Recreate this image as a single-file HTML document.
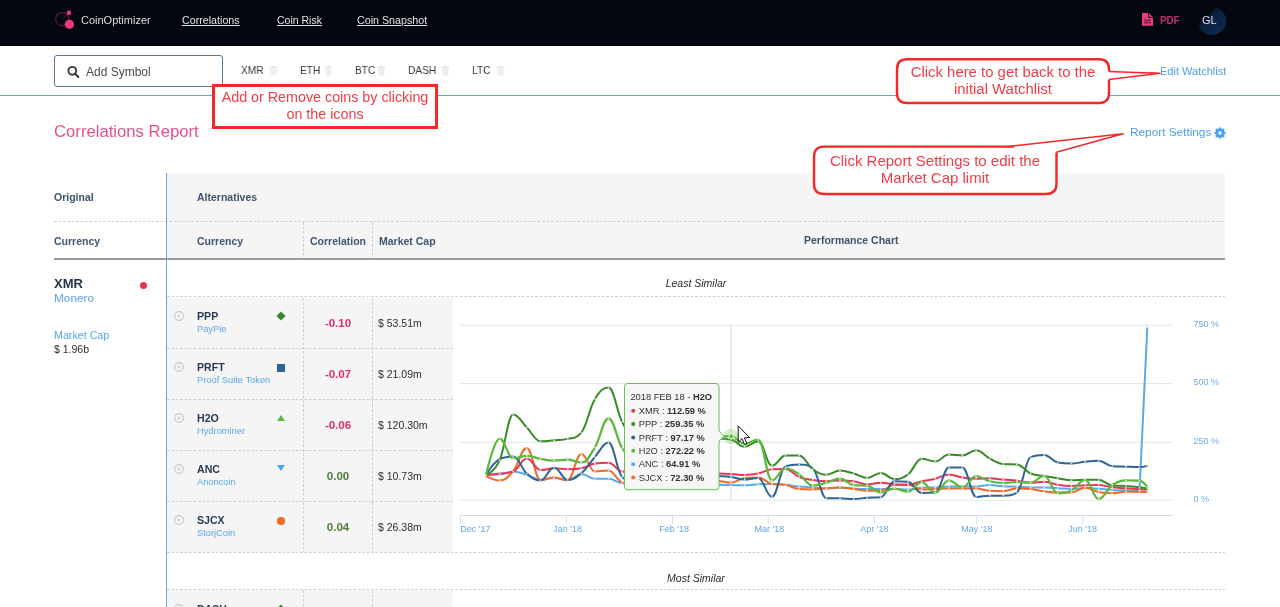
<!DOCTYPE html>
<html><head><meta charset="utf-8"><title>CoinOptimizer - Correlations Report</title>
<style>
html,body{margin:0;padding:0;background:#fff;width:1280px;height:607px;overflow:hidden;position:relative;font-family:"Liberation Sans",sans-serif;}
.t{position:absolute;white-space:nowrap;}
body>div,body>svg{will-change:transform;}
.b{position:absolute;}
svg.b text{font-family:"Liberation Sans",sans-serif;}
</style></head><body>
<div class="b" style="left:0px;top:0px;width:1280px;height:46px;background:#03070f;"></div>
<svg class="b" style="left:50px;top:6px" width="30" height="30" viewBox="50 6 30 30">
<circle cx="62.3" cy="19.2" r="6.7" fill="none" stroke="#6a1434" stroke-width="1.2"/>
<line x1="62.3" y1="19.2" x2="68.8" y2="12.8" stroke="#6a1434" stroke-width="1"/>
<circle cx="68.9" cy="12.7" r="2.2" fill="#ee3a7c"/>
<circle cx="69.4" cy="24.3" r="4.6" fill="#ee3a7c"/>
</svg>
<div class="t" style="left:80.60px;top:14.69px;font-size:11px;line-height:11px;color:#dcdcdc;">CoinOptimizer</div>
<div class="t" style="left:182.00px;top:14.94px;font-size:10.7px;line-height:10.7px;color:#e2e2e2;text-decoration:underline;">Correlations</div>
<div class="t" style="left:276.60px;top:15.11px;font-size:10.5px;line-height:10.5px;color:#e2e2e2;text-decoration:underline;">Coin Risk</div>
<div class="t" style="left:357.00px;top:14.94px;font-size:10.7px;line-height:10.7px;color:#e2e2e2;text-decoration:underline;">Coin Snapshot</div>
<svg class="b" style="left:1140px;top:11px" width="16" height="17" viewBox="1140 11 16 17">
<path d="M1142 13 H1148.8 L1153 17.2 V25.8 H1142 Z" fill="#e83e7a"/>
<path d="M1148.6 13 V17.4 H1153" fill="none" stroke="#03070f" stroke-width="0.9"/>
<rect x="1144" y="19.4" width="7" height="4.2" fill="#8e2450"/>
<rect x="1144" y="21.1" width="7" height="0.8" fill="#c8306a"/>
</svg>
<div class="t" style="left:1159.60px;top:15.23px;font-size:10.6px;line-height:10.6px;color:#c8306a;font-weight:700;transform:scaleX(0.92);transform-origin:0 0;">PDF</div>
<div class="b" style="left:1197.6px;top:6.5px;width:28px;height:28px;border-radius:50%;background:linear-gradient(135deg,rgba(3,7,15,0) 30%,#0a2140 40%,#0f2d52 100%);"></div>
<div class="t" style="left:1201.80px;top:14.89px;font-size:11px;line-height:11px;color:#dedede;">GL</div>
<div class="b" style="left:54px;top:55px;width:169px;height:32px;box-sizing:border-box;border:1px solid #5b7691;border-radius:3px;background:#fff;"></div>
<svg class="b" style="left:64px;top:64px" width="18" height="18" viewBox="64 64 18 18">
<circle cx="72.3" cy="70.8" r="3.9" fill="none" stroke="#3a3a3a" stroke-width="1.9"/>
<line x1="75.2" y1="73.8" x2="78.3" y2="77" stroke="#3a3a3a" stroke-width="2.1" stroke-linecap="round"/>
</svg>
<div class="t" style="left:85.50px;top:66.14px;font-size:12px;line-height:12px;color:#4a4a4a;">Add Symbol</div>
<div class="t" style="left:241.00px;top:64.81px;font-size:11.8px;line-height:11.8px;color:#383838;transform:scaleX(0.86);transform-origin:0 0;">XMR</div>
<svg class="b" style="left:269.4px;top:65px" width="9" height="11" viewBox="0 0 9 11">
<rect x="0.3" y="1.8" width="8.2" height="1.1" fill="#e6e6e6"/><rect x="2.9" y="0.9" width="3" height="1.1" fill="#e6e6e6"/>
<path d="M1.1 3.4 H7.7 L7.2 10.3 H1.6 Z" fill="#ebebeb"/>
<rect x="3" y="4" width="0.7" height="5.5" fill="#f4f4f4"/><rect x="5.2" y="4" width="0.7" height="5.5" fill="#f4f4f4"/>
</svg>
<div class="t" style="left:300.00px;top:64.81px;font-size:11.8px;line-height:11.8px;color:#383838;transform:scaleX(0.86);transform-origin:0 0;">ETH</div>
<svg class="b" style="left:324px;top:65px" width="9" height="11" viewBox="0 0 9 11">
<rect x="0.3" y="1.8" width="8.2" height="1.1" fill="#e6e6e6"/><rect x="2.9" y="0.9" width="3" height="1.1" fill="#e6e6e6"/>
<path d="M1.1 3.4 H7.7 L7.2 10.3 H1.6 Z" fill="#ebebeb"/>
<rect x="3" y="4" width="0.7" height="5.5" fill="#f4f4f4"/><rect x="5.2" y="4" width="0.7" height="5.5" fill="#f4f4f4"/>
</svg>
<div class="t" style="left:354.70px;top:64.81px;font-size:11.8px;line-height:11.8px;color:#383838;transform:scaleX(0.86);transform-origin:0 0;">BTC</div>
<svg class="b" style="left:377px;top:65px" width="9" height="11" viewBox="0 0 9 11">
<rect x="0.3" y="1.8" width="8.2" height="1.1" fill="#e6e6e6"/><rect x="2.9" y="0.9" width="3" height="1.1" fill="#e6e6e6"/>
<path d="M1.1 3.4 H7.7 L7.2 10.3 H1.6 Z" fill="#ebebeb"/>
<rect x="3" y="4" width="0.7" height="5.5" fill="#f4f4f4"/><rect x="5.2" y="4" width="0.7" height="5.5" fill="#f4f4f4"/>
</svg>
<div class="t" style="left:408.30px;top:64.81px;font-size:11.8px;line-height:11.8px;color:#383838;transform:scaleX(0.86);transform-origin:0 0;">DASH</div>
<svg class="b" style="left:441px;top:65px" width="9" height="11" viewBox="0 0 9 11">
<rect x="0.3" y="1.8" width="8.2" height="1.1" fill="#e6e6e6"/><rect x="2.9" y="0.9" width="3" height="1.1" fill="#e6e6e6"/>
<path d="M1.1 3.4 H7.7 L7.2 10.3 H1.6 Z" fill="#ebebeb"/>
<rect x="3" y="4" width="0.7" height="5.5" fill="#f4f4f4"/><rect x="5.2" y="4" width="0.7" height="5.5" fill="#f4f4f4"/>
</svg>
<div class="t" style="left:471.80px;top:64.81px;font-size:11.8px;line-height:11.8px;color:#383838;transform:scaleX(0.86);transform-origin:0 0;">LTC</div>
<svg class="b" style="left:496px;top:65px" width="9" height="11" viewBox="0 0 9 11">
<rect x="0.3" y="1.8" width="8.2" height="1.1" fill="#e6e6e6"/><rect x="2.9" y="0.9" width="3" height="1.1" fill="#e6e6e6"/>
<path d="M1.1 3.4 H7.7 L7.2 10.3 H1.6 Z" fill="#ebebeb"/>
<rect x="3" y="4" width="0.7" height="5.5" fill="#f4f4f4"/><rect x="5.2" y="4" width="0.7" height="5.5" fill="#f4f4f4"/>
</svg>
<div class="t" style="left:1160.40px;top:65.99px;font-size:11px;line-height:11px;color:#4a9ff5;">Edit Watchlist</div>
<div class="b" style="left:0px;top:95px;width:1280px;height:1px;background:#55a8ef;"></div>
<div class="t" style="left:54.30px;top:124.16px;font-size:16.7px;line-height:16.7px;color:#e8508a;">Correlations Report</div>
<div class="t" style="left:1130.40px;top:127.21px;font-size:11.8px;line-height:11.8px;color:#4a9ff5;">Report Settings</div>
<svg class="b" style="left:1213.3px;top:125.8px" width="14" height="14" viewBox="-7 -7 14 14">
<g fill="#4a9ff5">
<circle r="4.1"/>
<rect x="-1.3" y="-5.5" width="2.6" height="11" rx="0.5"/>
<rect x="-1.3" y="-5.5" width="2.6" height="11" rx="0.5" transform="rotate(45)"/>
<rect x="-1.3" y="-5.5" width="2.6" height="11" rx="0.5" transform="rotate(90)"/>
<rect x="-1.3" y="-5.5" width="2.6" height="11" rx="0.5" transform="rotate(135)"/>
</g><circle r="1.7" fill="#fff"/>
</svg>
<div class="b" style="left:167px;top:173px;width:1058px;height:86px;background:#f5f5f5;"></div>
<div class="b" style="left:54px;top:258px;width:1171px;height:2px;background:#9a9a9a;"></div>
<div class="b" style="left:54px;top:221px;width:1171px;height:1px;background-image:linear-gradient(to right,#cfcfcf 0,#cfcfcf 2.5px,transparent 2.5px);background-size:4.45px 1px;"></div>
<div class="b" style="left:303px;top:222px;width:1px;height:36px;background-image:linear-gradient(to bottom,#cfcfcf 0,#cfcfcf 2.5px,transparent 2.5px);background-size:1px 4.45px;"></div>
<div class="b" style="left:372px;top:222px;width:1px;height:36px;background-image:linear-gradient(to bottom,#cfcfcf 0,#cfcfcf 2.5px,transparent 2.5px);background-size:1px 4.45px;"></div>
<div class="t" style="left:54.00px;top:192.11px;font-size:10.5px;line-height:10.5px;color:#3f5570;font-weight:700;">Original</div>
<div class="t" style="left:197.00px;top:192.11px;font-size:10.5px;line-height:10.5px;color:#3f5570;font-weight:700;">Alternatives</div>
<div class="t" style="left:54.00px;top:235.51px;font-size:10.5px;line-height:10.5px;color:#3f5570;font-weight:700;">Currency</div>
<div class="t" style="left:197.00px;top:235.51px;font-size:10.5px;line-height:10.5px;color:#3f5570;font-weight:700;">Currency</div>
<div class="t" style="left:309.70px;top:235.51px;font-size:10.5px;line-height:10.5px;color:#3f5570;font-weight:700;">Correlation</div>
<div class="t" style="left:378.60px;top:235.51px;font-size:10.5px;line-height:10.5px;color:#3f5570;font-weight:700;">Market Cap</div>
<div class="t" style="left:804.40px;top:234.81px;font-size:10.5px;line-height:10.5px;color:#3f5570;font-weight:700;">Performance Chart</div>
<div class="t" style="left:54.00px;top:277.00px;font-size:13px;line-height:13px;color:#1f3448;font-weight:700;">XMR</div>
<div class="b" style="left:140px;top:282px;width:7.2px;height:7.2px;border-radius:50%;background:#e8304e;"></div>
<div class="t" style="left:54.00px;top:292.61px;font-size:11.8px;line-height:11.8px;color:#5aa5f0;">Monero</div>
<div class="t" style="left:54.00px;top:329.94px;font-size:10.7px;line-height:10.7px;color:#5aa5f0;">Market Cap</div>
<div class="t" style="left:54.00px;top:343.51px;font-size:10.5px;line-height:10.5px;color:#2a2a2a;">$ 1.96b</div>
<div class="t" style="left:395.50px;width:600px;text-align:center;top:278.31px;font-size:10.5px;line-height:10.5px;color:#2a2a33;font-style:italic;">Least Similar</div>
<div class="b" style="left:167px;top:296px;width:1058px;height:1px;background-image:linear-gradient(to right,#cfcfcf 0,#cfcfcf 2.5px,transparent 2.5px);background-size:4.45px 1px;"></div>
<div class="b" style="left:167px;top:298px;width:286px;height:254px;background:#f5f5f5;"></div>
<div class="b" style="left:167px;top:348px;width:286px;height:1px;background-image:linear-gradient(to right,#cfcfcf 0,#cfcfcf 2.5px,transparent 2.5px);background-size:4.45px 1px;"></div>
<div class="b" style="left:167px;top:399px;width:286px;height:1px;background-image:linear-gradient(to right,#cfcfcf 0,#cfcfcf 2.5px,transparent 2.5px);background-size:4.45px 1px;"></div>
<div class="b" style="left:167px;top:450px;width:286px;height:1px;background-image:linear-gradient(to right,#cfcfcf 0,#cfcfcf 2.5px,transparent 2.5px);background-size:4.45px 1px;"></div>
<div class="b" style="left:167px;top:501px;width:286px;height:1px;background-image:linear-gradient(to right,#cfcfcf 0,#cfcfcf 2.5px,transparent 2.5px);background-size:4.45px 1px;"></div>
<div class="b" style="left:303px;top:298px;width:1px;height:254px;background-image:linear-gradient(to bottom,#cfcfcf 0,#cfcfcf 2.5px,transparent 2.5px);background-size:1px 4.45px;"></div>
<div class="b" style="left:372px;top:298px;width:1px;height:254px;background-image:linear-gradient(to bottom,#cfcfcf 0,#cfcfcf 2.5px,transparent 2.5px);background-size:1px 4.45px;"></div>
<div class="b" style="left:167px;top:552px;width:1058px;height:1px;background-image:linear-gradient(to right,#cfcfcf 0,#cfcfcf 2.5px,transparent 2.5px);background-size:4.45px 1px;"></div>
<svg class="b" style="left:173px;top:310px" width="12" height="12" viewBox="-6 -6 12 12">
<circle r="4.4" fill="none" stroke="#c8c8c8" stroke-width="1.1"/><path d="M-1.6 -1.6 L1.6 1.6 M1.6 -1.6 L-1.6 1.6" stroke="#d0d0d0" stroke-width="1"/></svg>
<div class="t" style="left:197.00px;top:311.33px;font-size:10.6px;line-height:10.6px;color:#263a55;font-weight:700;">PPP</div>
<div class="t" style="left:197.00px;top:324.63px;font-size:9.3px;line-height:9.3px;color:#5aa5f0;">PayPie</div>
<div class="t" style="left:37.80px;width:600px;text-align:center;top:317.77px;font-size:11.5px;line-height:11.5px;color:#e0306a;font-weight:700;">-0.10</div>
<div class="t" style="left:378.40px;top:318.31px;font-size:10.5px;line-height:10.5px;color:#2f2f2f;">$ 53.51m</div>
<svg class="b" style="left:274.7px;top:310.3px" width="12" height="12" viewBox="-6 -6 12 12"><path d="M0 -4.6 L4.6 0 L0 4.6 L-4.6 0 Z" fill="#3a8a2a"/></svg>
<svg class="b" style="left:173px;top:361px" width="12" height="12" viewBox="-6 -6 12 12">
<circle r="4.4" fill="none" stroke="#c8c8c8" stroke-width="1.1"/><path d="M-1.6 -1.6 L1.6 1.6 M1.6 -1.6 L-1.6 1.6" stroke="#d0d0d0" stroke-width="1"/></svg>
<div class="t" style="left:197.00px;top:362.33px;font-size:10.6px;line-height:10.6px;color:#263a55;font-weight:700;">PRFT</div>
<div class="t" style="left:197.00px;top:375.63px;font-size:9.3px;line-height:9.3px;color:#5aa5f0;">Proof Suite Token</div>
<div class="t" style="left:37.80px;width:600px;text-align:center;top:368.77px;font-size:11.5px;line-height:11.5px;color:#e0306a;font-weight:700;">-0.07</div>
<div class="t" style="left:378.40px;top:369.31px;font-size:10.5px;line-height:10.5px;color:#2f2f2f;">$ 21.09m</div>
<div class="b" style="left:277.09999999999997px;top:364px;width:7.5px;height:7.5px;background:#2e6496;"></div>
<svg class="b" style="left:173px;top:412px" width="12" height="12" viewBox="-6 -6 12 12">
<circle r="4.4" fill="none" stroke="#c8c8c8" stroke-width="1.1"/><path d="M-1.6 -1.6 L1.6 1.6 M1.6 -1.6 L-1.6 1.6" stroke="#d0d0d0" stroke-width="1"/></svg>
<div class="t" style="left:197.00px;top:413.33px;font-size:10.6px;line-height:10.6px;color:#263a55;font-weight:700;">H2O</div>
<div class="t" style="left:197.00px;top:426.63px;font-size:9.3px;line-height:9.3px;color:#5aa5f0;">Hydrominer</div>
<div class="t" style="left:37.80px;width:600px;text-align:center;top:419.77px;font-size:11.5px;line-height:11.5px;color:#e0306a;font-weight:700;">-0.06</div>
<div class="t" style="left:378.40px;top:420.31px;font-size:10.5px;line-height:10.5px;color:#2f2f2f;">$ 120.30m</div>
<svg class="b" style="left:274.7px;top:412px" width="12" height="12" viewBox="-6 -6 12 12"><path d="M0 -3 L4 3 L-4 3 Z" fill="#5cb83c"/></svg>
<svg class="b" style="left:173px;top:463px" width="12" height="12" viewBox="-6 -6 12 12">
<circle r="4.4" fill="none" stroke="#c8c8c8" stroke-width="1.1"/><path d="M-1.6 -1.6 L1.6 1.6 M1.6 -1.6 L-1.6 1.6" stroke="#d0d0d0" stroke-width="1"/></svg>
<div class="t" style="left:197.00px;top:464.33px;font-size:10.6px;line-height:10.6px;color:#263a55;font-weight:700;">ANC</div>
<div class="t" style="left:197.00px;top:477.63px;font-size:9.3px;line-height:9.3px;color:#5aa5f0;">Anoncoin</div>
<div class="t" style="left:37.80px;width:600px;text-align:center;top:470.77px;font-size:11.5px;line-height:11.5px;color:#4d7d38;font-weight:700;">0.00</div>
<div class="t" style="left:378.40px;top:471.31px;font-size:10.5px;line-height:10.5px;color:#2f2f2f;">$ 10.73m</div>
<svg class="b" style="left:274.7px;top:461.5px" width="12" height="12" viewBox="-6 -6 12 12"><path d="M-4 -3 L4 -3 L0 3 Z" fill="#4aa8f0"/></svg>
<svg class="b" style="left:173px;top:514px" width="12" height="12" viewBox="-6 -6 12 12">
<circle r="4.4" fill="none" stroke="#c8c8c8" stroke-width="1.1"/><path d="M-1.6 -1.6 L1.6 1.6 M1.6 -1.6 L-1.6 1.6" stroke="#d0d0d0" stroke-width="1"/></svg>
<div class="t" style="left:197.00px;top:515.33px;font-size:10.6px;line-height:10.6px;color:#263a55;font-weight:700;">SJCX</div>
<div class="t" style="left:197.00px;top:528.63px;font-size:9.3px;line-height:9.3px;color:#5aa5f0;">StorjCoin</div>
<div class="t" style="left:37.80px;width:600px;text-align:center;top:521.77px;font-size:11.5px;line-height:11.5px;color:#4d7d38;font-weight:700;">0.04</div>
<div class="t" style="left:378.40px;top:522.31px;font-size:10.5px;line-height:10.5px;color:#2f2f2f;">$ 26.38m</div>
<div class="b" style="left:277.0px;top:517px;width:7.5px;height:7.5px;border-radius:50%;background:#f06a28;"></div>
<div class="t" style="left:395.50px;width:600px;text-align:center;top:572.61px;font-size:10.5px;line-height:10.5px;color:#2a2a33;font-style:italic;">Most Similar</div>
<div class="b" style="left:167px;top:589px;width:1058px;height:1px;background-image:linear-gradient(to right,#cfcfcf 0,#cfcfcf 2.5px,transparent 2.5px);background-size:4.45px 1px;"></div>
<div class="b" style="left:167px;top:590px;width:286px;height:17px;background:#f5f5f5;"></div>
<div class="b" style="left:303px;top:590px;width:1px;height:17px;background-image:linear-gradient(to bottom,#cfcfcf 0,#cfcfcf 2.5px,transparent 2.5px);background-size:1px 4.45px;"></div>
<div class="b" style="left:372px;top:590px;width:1px;height:17px;background-image:linear-gradient(to bottom,#cfcfcf 0,#cfcfcf 2.5px,transparent 2.5px);background-size:1px 4.45px;"></div>
<svg class="b" style="left:173px;top:603px" width="12" height="12" viewBox="-6 -6 12 12">
<circle r="4.4" fill="none" stroke="#c8c8c8" stroke-width="1.1"/></svg>
<div class="t" style="left:197.00px;top:604.33px;font-size:10.6px;line-height:10.6px;color:#263a55;font-weight:700;">DASH</div>
<svg class="b" style="left:274.7px;top:603.3px" width="12" height="12" viewBox="-6 -6 12 12"><path d="M0 -4.6 L4.6 0 L0 4.6 L-4.6 0 Z" fill="#3a8a2a"/></svg>
<div class="b" style="left:166px;top:173px;width:1px;height:434px;background:#55a8ef;"></div>
<svg class="b" style="left:0;top:0" width="1280" height="607" viewBox="0 0 1280 607">
<rect x="460" y="324.7" width="713" height="1" fill="#e6e6e6"/>
<rect x="460" y="383.1" width="713" height="1" fill="#e6e6e6"/>
<rect x="460" y="441.8" width="713" height="1" fill="#e6e6e6"/>
<rect x="460" y="499.7" width="713" height="1" fill="#e6e6e6"/>
<rect x="460" y="515" width="713" height="1" fill="#d3dbed"/>
<rect x="459.9" y="515" width="1" height="9" fill="#d8dfee"/>
<rect x="565.9" y="515" width="1" height="9" fill="#d8dfee"/>
<rect x="671.9" y="515" width="1" height="9" fill="#d8dfee"/>
<rect x="767.7" y="515" width="1" height="9" fill="#d8dfee"/>
<rect x="873.7" y="515" width="1" height="9" fill="#d8dfee"/>
<rect x="976.3" y="515" width="1" height="9" fill="#d8dfee"/>
<rect x="1082.3" y="515" width="1" height="9" fill="#d8dfee"/>
<rect x="730.5" y="325" width="1" height="175" fill="#d8d8d8"/>
<text x="460.3" y="532.2" font-size="9" fill="#5ea6ee" font-family="Liberation Sans">Dec '17</text>
<text x="553.3" y="532.2" font-size="9" fill="#5ea6ee" font-family="Liberation Sans">Jan '18</text>
<text x="659.2" y="532.2" font-size="9" fill="#5ea6ee" font-family="Liberation Sans">Feb '18</text>
<text x="754.5" y="532.2" font-size="9" fill="#5ea6ee" font-family="Liberation Sans">Mar '18</text>
<text x="860.2" y="532.2" font-size="9" fill="#5ea6ee" font-family="Liberation Sans">Apr '18</text>
<text x="961.3" y="532.2" font-size="9" fill="#5ea6ee" font-family="Liberation Sans">May '18</text>
<text x="1068.3" y="532.2" font-size="9" fill="#5ea6ee" font-family="Liberation Sans">Jun '18</text>
<text x="1193.5" y="327.4" font-size="9" fill="#6aaaf0" font-family="Liberation Sans">750 %</text>
<text x="1193.5" y="384.6" font-size="9" fill="#6aaaf0" font-family="Liberation Sans">500 %</text>
<text x="1193.5" y="444.4" font-size="9" fill="#6aaaf0" font-family="Liberation Sans">250 %</text>
<text x="1193.5" y="501.8" font-size="9" fill="#6aaaf0" font-family="Liberation Sans">0 %</text>
<path d="M486.0 474.9 C486.0 474.9 494.2 474.9 499.6 474.3 C505.1 473.7 507.8 471.6 513.2 471.6 C518.7 471.6 521.4 473.3 526.8 474.9 C532.3 476.5 535.0 479.7 540.5 479.7 C545.9 479.7 548.6 477.9 554.1 477.9 C559.5 477.9 562.2 480.2 567.7 480.2 C573.1 480.2 575.9 473.9 581.3 473.9 C586.8 473.9 589.5 478.8 594.9 478.8 C600.4 478.8 603.1 478.8 608.5 478.8 C614.0 478.8 616.7 482.6 622.1 483.3 C627.6 484.0 630.3 483.8 635.8 484.0 C641.2 484.2 643.9 484.3 649.4 484.5 C654.8 484.7 657.5 485.0 663.0 485.0 C668.4 485.0 671.2 485.0 676.6 485.0 C682.1 485.0 684.8 485.0 690.2 485.0 C695.7 485.0 698.4 485.0 703.8 485.0 C709.3 485.0 712.0 484.8 717.5 484.8 C722.9 484.8 725.6 485.0 731.1 485.1 C736.5 485.2 739.2 485.3 744.7 485.3 C750.1 485.3 752.9 484.6 758.3 484.3 C763.7 484.0 766.5 483.9 771.9 483.9 C777.4 483.9 780.1 484.3 785.5 484.8 C791.0 485.3 793.7 486.0 799.1 486.5 C804.6 487.0 807.3 487.0 812.8 487.4 C818.2 487.8 820.9 488.4 826.4 488.4 C831.8 488.4 834.5 487.4 840.0 487.4 C845.4 487.4 848.2 488.3 853.6 488.6 C859.1 488.9 861.8 489.1 867.2 489.1 C872.7 489.1 875.4 489.1 880.8 489.1 C886.3 489.1 889.0 489.1 894.5 489.1 C899.9 489.1 902.6 489.6 908.1 489.6 C913.5 489.6 916.2 488.2 921.7 487.8 C927.1 487.4 929.8 487.7 935.3 487.4 C940.7 487.1 943.5 486.5 948.9 486.5 C954.4 486.5 957.1 486.5 962.5 486.5 C968.0 486.5 970.7 486.5 976.1 486.5 C981.6 486.5 984.3 485.1 989.8 485.1 C995.2 485.1 997.9 485.9 1003.4 486.2 C1008.8 486.5 1011.5 486.5 1017.0 486.7 C1022.4 486.9 1025.2 487.4 1030.6 487.4 C1036.0 487.4 1038.8 487.4 1044.2 487.4 C1049.7 487.4 1052.4 487.9 1057.8 488.2 C1063.3 488.5 1066.0 489.0 1071.4 489.0 C1076.9 489.0 1079.6 488.0 1085.1 488.0 C1090.5 488.0 1093.2 488.4 1098.7 488.8 C1104.1 489.2 1106.8 489.6 1112.3 489.9 C1117.7 490.2 1120.5 490.2 1125.9 490.4 C1131.4 490.6 1139.5 490.7 1139.5 490.7 L1147.3 327.5" fill="none" stroke="#55aaf0" stroke-width="2" stroke-linejoin="round" stroke-linecap="round"/>
<circle cx="486.0" cy="474.9" r="0.9" fill="#fff" fill-opacity="0.75"/>
<circle cx="499.6" cy="474.3" r="0.9" fill="#fff" fill-opacity="0.75"/>
<circle cx="513.2" cy="471.6" r="0.9" fill="#fff" fill-opacity="0.75"/>
<circle cx="526.8" cy="474.9" r="0.9" fill="#fff" fill-opacity="0.75"/>
<circle cx="540.5" cy="479.7" r="0.9" fill="#fff" fill-opacity="0.75"/>
<circle cx="554.1" cy="477.9" r="0.9" fill="#fff" fill-opacity="0.75"/>
<circle cx="567.7" cy="480.2" r="0.9" fill="#fff" fill-opacity="0.75"/>
<circle cx="581.3" cy="473.9" r="0.9" fill="#fff" fill-opacity="0.75"/>
<circle cx="594.9" cy="478.8" r="0.9" fill="#fff" fill-opacity="0.75"/>
<circle cx="608.5" cy="478.8" r="0.9" fill="#fff" fill-opacity="0.75"/>
<circle cx="622.1" cy="483.3" r="0.9" fill="#fff" fill-opacity="0.75"/>
<circle cx="635.8" cy="484.0" r="0.9" fill="#fff" fill-opacity="0.75"/>
<circle cx="649.4" cy="484.5" r="0.9" fill="#fff" fill-opacity="0.75"/>
<circle cx="663.0" cy="485.0" r="0.9" fill="#fff" fill-opacity="0.75"/>
<circle cx="676.6" cy="485.0" r="0.9" fill="#fff" fill-opacity="0.75"/>
<circle cx="690.2" cy="485.0" r="0.9" fill="#fff" fill-opacity="0.75"/>
<circle cx="703.8" cy="485.0" r="0.9" fill="#fff" fill-opacity="0.75"/>
<circle cx="717.5" cy="484.8" r="0.9" fill="#fff" fill-opacity="0.75"/>
<circle cx="731.1" cy="485.1" r="0.9" fill="#fff" fill-opacity="0.75"/>
<circle cx="744.7" cy="485.3" r="0.9" fill="#fff" fill-opacity="0.75"/>
<circle cx="758.3" cy="484.3" r="0.9" fill="#fff" fill-opacity="0.75"/>
<circle cx="771.9" cy="483.9" r="0.9" fill="#fff" fill-opacity="0.75"/>
<circle cx="785.5" cy="484.8" r="0.9" fill="#fff" fill-opacity="0.75"/>
<circle cx="799.1" cy="486.5" r="0.9" fill="#fff" fill-opacity="0.75"/>
<circle cx="812.8" cy="487.4" r="0.9" fill="#fff" fill-opacity="0.75"/>
<circle cx="826.4" cy="488.4" r="0.9" fill="#fff" fill-opacity="0.75"/>
<circle cx="840.0" cy="487.4" r="0.9" fill="#fff" fill-opacity="0.75"/>
<circle cx="853.6" cy="488.6" r="0.9" fill="#fff" fill-opacity="0.75"/>
<circle cx="867.2" cy="489.1" r="0.9" fill="#fff" fill-opacity="0.75"/>
<circle cx="880.8" cy="489.1" r="0.9" fill="#fff" fill-opacity="0.75"/>
<circle cx="894.5" cy="489.1" r="0.9" fill="#fff" fill-opacity="0.75"/>
<circle cx="908.1" cy="489.6" r="0.9" fill="#fff" fill-opacity="0.75"/>
<circle cx="921.7" cy="487.8" r="0.9" fill="#fff" fill-opacity="0.75"/>
<circle cx="935.3" cy="487.4" r="0.9" fill="#fff" fill-opacity="0.75"/>
<circle cx="948.9" cy="486.5" r="0.9" fill="#fff" fill-opacity="0.75"/>
<circle cx="962.5" cy="486.5" r="0.9" fill="#fff" fill-opacity="0.75"/>
<circle cx="976.1" cy="486.5" r="0.9" fill="#fff" fill-opacity="0.75"/>
<circle cx="989.8" cy="485.1" r="0.9" fill="#fff" fill-opacity="0.75"/>
<circle cx="1003.4" cy="486.2" r="0.9" fill="#fff" fill-opacity="0.75"/>
<circle cx="1017.0" cy="486.7" r="0.9" fill="#fff" fill-opacity="0.75"/>
<circle cx="1030.6" cy="487.4" r="0.9" fill="#fff" fill-opacity="0.75"/>
<circle cx="1044.2" cy="487.4" r="0.9" fill="#fff" fill-opacity="0.75"/>
<circle cx="1057.8" cy="488.2" r="0.9" fill="#fff" fill-opacity="0.75"/>
<circle cx="1071.4" cy="489.0" r="0.9" fill="#fff" fill-opacity="0.75"/>
<circle cx="1085.1" cy="488.0" r="0.9" fill="#fff" fill-opacity="0.75"/>
<circle cx="1098.7" cy="488.8" r="0.9" fill="#fff" fill-opacity="0.75"/>
<circle cx="1112.3" cy="489.9" r="0.9" fill="#fff" fill-opacity="0.75"/>
<circle cx="1125.9" cy="490.4" r="0.9" fill="#fff" fill-opacity="0.75"/>
<circle cx="1139.5" cy="490.7" r="0.9" fill="#fff" fill-opacity="0.75"/>
<circle cx="1147.3" cy="327.5" r="0.9" fill="#fff" fill-opacity="0.75"/>
<path d="M486.0 476.2 C486.0 476.2 494.2 480.5 499.6 480.5 C505.1 480.5 507.8 477.5 513.2 471.0 C518.7 464.5 521.4 448.0 526.8 448.0 C532.3 448.0 535.0 480.2 540.5 480.2 C545.9 480.2 548.6 477.3 554.1 477.3 C559.5 477.3 562.2 480.2 567.7 480.2 C573.1 480.2 575.9 454.0 581.3 454.0 C586.8 454.0 589.5 471.5 594.9 471.5 C600.4 471.5 603.1 470.6 608.5 470.6 C614.0 470.6 616.7 480.8 622.1 482.4 C627.6 484.0 630.3 484.0 635.8 484.0 C641.2 484.0 643.9 483.4 649.4 483.0 C654.8 482.6 657.5 482.4 663.0 482.0 C668.4 481.6 671.2 481.0 676.6 481.0 C682.1 481.0 684.8 481.0 690.2 481.0 C695.7 481.0 698.4 481.0 703.8 481.0 C709.3 481.0 712.0 481.0 717.5 481.0 C722.9 481.0 725.6 482.7 731.1 482.7 C736.5 482.7 739.2 478.3 744.7 477.9 C750.1 477.5 752.9 477.5 758.3 477.5 C763.7 477.5 766.5 483.0 771.9 483.9 C777.4 484.8 780.1 483.9 785.5 484.8 C791.0 485.7 793.7 488.8 799.1 489.1 C804.6 489.4 807.3 489.4 812.8 489.4 C818.2 489.4 820.9 488.6 826.4 488.2 C831.8 487.8 834.5 487.4 840.0 487.4 C845.4 487.4 848.2 488.4 853.6 489.1 C859.1 489.8 861.8 490.8 867.2 490.8 C872.7 490.8 875.4 490.8 880.8 490.8 C886.3 490.8 889.0 484.8 894.5 484.8 C899.9 484.8 902.6 484.8 908.1 484.8 C913.5 484.8 916.2 489.5 921.7 489.5 C927.1 489.5 929.8 489.3 935.3 489.1 C940.7 488.9 943.5 488.6 948.9 488.6 C954.4 488.6 957.1 488.6 962.5 488.6 C968.0 488.6 970.7 488.6 976.1 488.6 C981.6 488.6 984.3 490.4 989.8 490.8 C995.2 491.2 997.9 491.2 1003.4 491.2 C1008.8 491.2 1011.5 488.4 1017.0 488.4 C1022.4 488.4 1025.2 488.5 1030.6 489.1 C1036.0 489.7 1038.8 490.6 1044.2 491.3 C1049.7 492.0 1052.4 492.6 1057.8 492.6 C1063.3 492.6 1066.0 492.6 1071.4 492.4 C1076.9 492.2 1079.6 487.7 1085.1 487.7 C1090.5 487.7 1093.2 490.9 1098.7 492.0 C1104.1 493.1 1106.8 493.3 1112.3 493.3 C1117.7 493.3 1120.5 491.6 1125.9 491.6 C1131.4 491.6 1134.1 491.9 1139.5 491.9 C1142.6 491.9 1147.3 491.9 1147.3 491.9" fill="none" stroke="#f26a25" stroke-width="2" stroke-linejoin="round" stroke-linecap="round"/>
<circle cx="486.0" cy="476.2" r="0.9" fill="#fff" fill-opacity="0.75"/>
<circle cx="499.6" cy="480.5" r="0.9" fill="#fff" fill-opacity="0.75"/>
<circle cx="513.2" cy="471.0" r="0.9" fill="#fff" fill-opacity="0.75"/>
<circle cx="526.8" cy="448.0" r="0.9" fill="#fff" fill-opacity="0.75"/>
<circle cx="540.5" cy="480.2" r="0.9" fill="#fff" fill-opacity="0.75"/>
<circle cx="554.1" cy="477.3" r="0.9" fill="#fff" fill-opacity="0.75"/>
<circle cx="567.7" cy="480.2" r="0.9" fill="#fff" fill-opacity="0.75"/>
<circle cx="581.3" cy="454.0" r="0.9" fill="#fff" fill-opacity="0.75"/>
<circle cx="594.9" cy="471.5" r="0.9" fill="#fff" fill-opacity="0.75"/>
<circle cx="608.5" cy="470.6" r="0.9" fill="#fff" fill-opacity="0.75"/>
<circle cx="622.1" cy="482.4" r="0.9" fill="#fff" fill-opacity="0.75"/>
<circle cx="635.8" cy="484.0" r="0.9" fill="#fff" fill-opacity="0.75"/>
<circle cx="649.4" cy="483.0" r="0.9" fill="#fff" fill-opacity="0.75"/>
<circle cx="663.0" cy="482.0" r="0.9" fill="#fff" fill-opacity="0.75"/>
<circle cx="676.6" cy="481.0" r="0.9" fill="#fff" fill-opacity="0.75"/>
<circle cx="690.2" cy="481.0" r="0.9" fill="#fff" fill-opacity="0.75"/>
<circle cx="703.8" cy="481.0" r="0.9" fill="#fff" fill-opacity="0.75"/>
<circle cx="717.5" cy="481.0" r="0.9" fill="#fff" fill-opacity="0.75"/>
<circle cx="731.1" cy="482.7" r="0.9" fill="#fff" fill-opacity="0.75"/>
<circle cx="744.7" cy="477.9" r="0.9" fill="#fff" fill-opacity="0.75"/>
<circle cx="758.3" cy="477.5" r="0.9" fill="#fff" fill-opacity="0.75"/>
<circle cx="771.9" cy="483.9" r="0.9" fill="#fff" fill-opacity="0.75"/>
<circle cx="785.5" cy="484.8" r="0.9" fill="#fff" fill-opacity="0.75"/>
<circle cx="799.1" cy="489.1" r="0.9" fill="#fff" fill-opacity="0.75"/>
<circle cx="812.8" cy="489.4" r="0.9" fill="#fff" fill-opacity="0.75"/>
<circle cx="826.4" cy="488.2" r="0.9" fill="#fff" fill-opacity="0.75"/>
<circle cx="840.0" cy="487.4" r="0.9" fill="#fff" fill-opacity="0.75"/>
<circle cx="853.6" cy="489.1" r="0.9" fill="#fff" fill-opacity="0.75"/>
<circle cx="867.2" cy="490.8" r="0.9" fill="#fff" fill-opacity="0.75"/>
<circle cx="880.8" cy="490.8" r="0.9" fill="#fff" fill-opacity="0.75"/>
<circle cx="894.5" cy="484.8" r="0.9" fill="#fff" fill-opacity="0.75"/>
<circle cx="908.1" cy="484.8" r="0.9" fill="#fff" fill-opacity="0.75"/>
<circle cx="921.7" cy="489.5" r="0.9" fill="#fff" fill-opacity="0.75"/>
<circle cx="935.3" cy="489.1" r="0.9" fill="#fff" fill-opacity="0.75"/>
<circle cx="948.9" cy="488.6" r="0.9" fill="#fff" fill-opacity="0.75"/>
<circle cx="962.5" cy="488.6" r="0.9" fill="#fff" fill-opacity="0.75"/>
<circle cx="976.1" cy="488.6" r="0.9" fill="#fff" fill-opacity="0.75"/>
<circle cx="989.8" cy="490.8" r="0.9" fill="#fff" fill-opacity="0.75"/>
<circle cx="1003.4" cy="491.2" r="0.9" fill="#fff" fill-opacity="0.75"/>
<circle cx="1017.0" cy="488.4" r="0.9" fill="#fff" fill-opacity="0.75"/>
<circle cx="1030.6" cy="489.1" r="0.9" fill="#fff" fill-opacity="0.75"/>
<circle cx="1044.2" cy="491.3" r="0.9" fill="#fff" fill-opacity="0.75"/>
<circle cx="1057.8" cy="492.6" r="0.9" fill="#fff" fill-opacity="0.75"/>
<circle cx="1071.4" cy="492.4" r="0.9" fill="#fff" fill-opacity="0.75"/>
<circle cx="1085.1" cy="487.7" r="0.9" fill="#fff" fill-opacity="0.75"/>
<circle cx="1098.7" cy="492.0" r="0.9" fill="#fff" fill-opacity="0.75"/>
<circle cx="1112.3" cy="493.3" r="0.9" fill="#fff" fill-opacity="0.75"/>
<circle cx="1125.9" cy="491.6" r="0.9" fill="#fff" fill-opacity="0.75"/>
<circle cx="1139.5" cy="491.9" r="0.9" fill="#fff" fill-opacity="0.75"/>
<circle cx="1147.3" cy="491.9" r="0.9" fill="#fff" fill-opacity="0.75"/>
<path d="M486.0 474.9 C486.0 474.9 494.2 474.3 499.6 473.6 C505.1 472.9 507.8 473.6 513.2 471.6 C518.7 469.6 521.4 458.4 526.8 458.4 C532.3 458.4 535.0 470.0 540.5 470.0 C545.9 470.0 548.6 468.3 554.1 468.3 C559.5 468.3 562.2 469.2 567.7 469.2 C573.1 469.2 575.9 469.2 581.3 468.3 C586.8 467.4 589.5 464.0 594.9 463.4 C600.4 462.8 603.1 462.8 608.5 462.8 C614.0 462.8 616.7 471.0 622.1 471.5 C627.6 472.0 630.3 471.7 635.8 472.0 C641.2 472.3 643.9 472.6 649.4 473.0 C654.8 473.4 657.5 474.0 663.0 474.0 C668.4 474.0 671.2 474.0 676.6 474.0 C682.1 474.0 684.8 473.5 690.2 473.5 C695.7 473.5 698.4 473.5 703.8 473.5 C709.3 473.5 712.0 473.5 717.5 473.5 C722.9 473.5 725.6 473.6 731.1 473.9 C736.5 474.2 739.2 474.9 744.7 474.9 C750.1 474.9 752.9 474.6 758.3 473.5 C763.7 472.4 766.5 469.5 771.9 469.2 C777.4 468.9 780.1 468.9 785.5 468.9 C791.0 468.9 793.7 474.8 799.1 477.0 C804.6 479.2 807.3 479.1 812.8 479.9 C818.2 480.7 820.9 481.2 826.4 481.2 C831.8 481.2 834.5 480.4 840.0 480.4 C845.4 480.4 848.2 480.5 853.6 481.3 C859.1 482.1 861.8 484.4 867.2 484.4 C872.7 484.4 875.4 482.7 880.8 482.7 C886.3 482.7 889.0 484.0 894.5 484.4 C899.9 484.8 902.6 484.8 908.1 484.8 C913.5 484.8 916.2 482.5 921.7 481.3 C927.1 480.1 929.8 480.1 935.3 478.7 C940.7 477.3 943.5 474.4 948.9 474.4 C954.4 474.4 957.1 476.6 962.5 477.5 C968.0 478.4 970.7 478.7 976.1 478.7 C981.6 478.7 984.3 478.2 989.8 478.2 C995.2 478.2 997.9 479.1 1003.4 479.6 C1008.8 480.1 1011.5 480.1 1017.0 480.7 C1022.4 481.3 1025.2 482.7 1030.6 482.7 C1036.0 482.7 1038.8 481.7 1044.2 481.7 C1049.7 481.7 1052.4 483.9 1057.8 484.8 C1063.3 485.7 1066.0 486.0 1071.4 486.0 C1076.9 486.0 1079.6 485.4 1085.1 485.2 C1090.5 485.0 1093.2 485.0 1098.7 485.0 C1104.1 485.0 1106.8 486.7 1112.3 487.3 C1117.7 487.9 1120.5 487.8 1125.9 488.2 C1131.4 488.6 1134.1 488.9 1139.5 489.3 C1142.6 489.5 1147.3 489.8 1147.3 489.8" fill="none" stroke="#e8365a" stroke-width="2" stroke-linejoin="round" stroke-linecap="round"/>
<circle cx="486.0" cy="474.9" r="0.9" fill="#fff" fill-opacity="0.75"/>
<circle cx="499.6" cy="473.6" r="0.9" fill="#fff" fill-opacity="0.75"/>
<circle cx="513.2" cy="471.6" r="0.9" fill="#fff" fill-opacity="0.75"/>
<circle cx="526.8" cy="458.4" r="0.9" fill="#fff" fill-opacity="0.75"/>
<circle cx="540.5" cy="470.0" r="0.9" fill="#fff" fill-opacity="0.75"/>
<circle cx="554.1" cy="468.3" r="0.9" fill="#fff" fill-opacity="0.75"/>
<circle cx="567.7" cy="469.2" r="0.9" fill="#fff" fill-opacity="0.75"/>
<circle cx="581.3" cy="468.3" r="0.9" fill="#fff" fill-opacity="0.75"/>
<circle cx="594.9" cy="463.4" r="0.9" fill="#fff" fill-opacity="0.75"/>
<circle cx="608.5" cy="462.8" r="0.9" fill="#fff" fill-opacity="0.75"/>
<circle cx="622.1" cy="471.5" r="0.9" fill="#fff" fill-opacity="0.75"/>
<circle cx="635.8" cy="472.0" r="0.9" fill="#fff" fill-opacity="0.75"/>
<circle cx="649.4" cy="473.0" r="0.9" fill="#fff" fill-opacity="0.75"/>
<circle cx="663.0" cy="474.0" r="0.9" fill="#fff" fill-opacity="0.75"/>
<circle cx="676.6" cy="474.0" r="0.9" fill="#fff" fill-opacity="0.75"/>
<circle cx="690.2" cy="473.5" r="0.9" fill="#fff" fill-opacity="0.75"/>
<circle cx="703.8" cy="473.5" r="0.9" fill="#fff" fill-opacity="0.75"/>
<circle cx="717.5" cy="473.5" r="0.9" fill="#fff" fill-opacity="0.75"/>
<circle cx="731.1" cy="473.9" r="0.9" fill="#fff" fill-opacity="0.75"/>
<circle cx="744.7" cy="474.9" r="0.9" fill="#fff" fill-opacity="0.75"/>
<circle cx="758.3" cy="473.5" r="0.9" fill="#fff" fill-opacity="0.75"/>
<circle cx="771.9" cy="469.2" r="0.9" fill="#fff" fill-opacity="0.75"/>
<circle cx="785.5" cy="468.9" r="0.9" fill="#fff" fill-opacity="0.75"/>
<circle cx="799.1" cy="477.0" r="0.9" fill="#fff" fill-opacity="0.75"/>
<circle cx="812.8" cy="479.9" r="0.9" fill="#fff" fill-opacity="0.75"/>
<circle cx="826.4" cy="481.2" r="0.9" fill="#fff" fill-opacity="0.75"/>
<circle cx="840.0" cy="480.4" r="0.9" fill="#fff" fill-opacity="0.75"/>
<circle cx="853.6" cy="481.3" r="0.9" fill="#fff" fill-opacity="0.75"/>
<circle cx="867.2" cy="484.4" r="0.9" fill="#fff" fill-opacity="0.75"/>
<circle cx="880.8" cy="482.7" r="0.9" fill="#fff" fill-opacity="0.75"/>
<circle cx="894.5" cy="484.4" r="0.9" fill="#fff" fill-opacity="0.75"/>
<circle cx="908.1" cy="484.8" r="0.9" fill="#fff" fill-opacity="0.75"/>
<circle cx="921.7" cy="481.3" r="0.9" fill="#fff" fill-opacity="0.75"/>
<circle cx="935.3" cy="478.7" r="0.9" fill="#fff" fill-opacity="0.75"/>
<circle cx="948.9" cy="474.4" r="0.9" fill="#fff" fill-opacity="0.75"/>
<circle cx="962.5" cy="477.5" r="0.9" fill="#fff" fill-opacity="0.75"/>
<circle cx="976.1" cy="478.7" r="0.9" fill="#fff" fill-opacity="0.75"/>
<circle cx="989.8" cy="478.2" r="0.9" fill="#fff" fill-opacity="0.75"/>
<circle cx="1003.4" cy="479.6" r="0.9" fill="#fff" fill-opacity="0.75"/>
<circle cx="1017.0" cy="480.7" r="0.9" fill="#fff" fill-opacity="0.75"/>
<circle cx="1030.6" cy="482.7" r="0.9" fill="#fff" fill-opacity="0.75"/>
<circle cx="1044.2" cy="481.7" r="0.9" fill="#fff" fill-opacity="0.75"/>
<circle cx="1057.8" cy="484.8" r="0.9" fill="#fff" fill-opacity="0.75"/>
<circle cx="1071.4" cy="486.0" r="0.9" fill="#fff" fill-opacity="0.75"/>
<circle cx="1085.1" cy="485.2" r="0.9" fill="#fff" fill-opacity="0.75"/>
<circle cx="1098.7" cy="485.0" r="0.9" fill="#fff" fill-opacity="0.75"/>
<circle cx="1112.3" cy="487.3" r="0.9" fill="#fff" fill-opacity="0.75"/>
<circle cx="1125.9" cy="488.2" r="0.9" fill="#fff" fill-opacity="0.75"/>
<circle cx="1139.5" cy="489.3" r="0.9" fill="#fff" fill-opacity="0.75"/>
<circle cx="1147.3" cy="489.8" r="0.9" fill="#fff" fill-opacity="0.75"/>
<path d="M486.0 474.9 C486.0 474.9 494.2 461.7 499.6 459.1 C505.1 456.5 507.8 456.5 513.2 456.5 C518.7 456.5 521.4 468.8 526.8 473.6 C532.3 478.4 535.0 480.6 540.5 480.6 C545.9 480.6 548.6 467.4 554.1 467.4 C559.5 467.4 562.2 480.0 567.7 480.0 C573.1 480.0 575.9 477.9 581.3 473.3 C586.8 468.7 589.5 463.2 594.9 457.0 C600.4 450.8 603.1 442.5 608.5 442.5 C614.0 442.5 616.7 472.0 622.1 477.0 C627.6 482.0 630.3 482.0 635.8 482.0 C641.2 482.0 643.9 480.8 649.4 480.0 C654.8 479.2 657.5 478.8 663.0 478.0 C668.4 477.2 671.2 476.8 676.6 476.0 C682.1 475.2 684.8 474.0 690.2 474.0 C695.7 474.0 698.4 474.6 703.8 475.0 C709.3 475.4 712.0 475.6 717.5 476.0 C722.9 476.4 725.6 476.3 731.1 477.0 C736.5 477.7 739.2 479.6 744.7 479.6 C750.1 479.6 752.9 477.9 758.3 477.9 C763.7 477.9 766.5 496.9 771.9 496.9 C777.4 496.9 780.1 467.8 785.5 466.1 C791.0 464.4 793.7 464.4 799.1 464.4 C804.6 464.4 807.3 464.4 812.8 468.3 C818.2 472.2 820.9 498.3 826.4 498.3 C831.8 498.3 834.5 498.3 840.0 498.3 C845.4 498.3 848.2 499.0 853.6 499.0 C859.1 499.0 861.8 498.2 867.2 497.8 C872.7 497.4 875.4 497.8 880.8 497.2 C886.3 496.6 889.0 481.3 894.5 481.3 C899.9 481.3 902.6 481.3 908.1 481.7 C913.5 482.1 916.2 492.9 921.7 492.9 C927.1 492.9 929.8 492.9 935.3 492.6 C940.7 492.3 943.5 467.5 948.9 467.5 C954.4 467.5 957.1 467.5 962.5 467.5 C968.0 467.5 970.7 496.9 976.1 496.9 C981.6 496.9 984.3 495.7 989.8 495.7 C995.2 495.7 997.9 495.7 1003.4 495.7 C1008.8 495.7 1011.5 495.7 1017.0 492.6 C1022.4 489.5 1025.2 459.2 1030.6 457.1 C1036.0 455.0 1038.8 455.0 1044.2 455.0 C1049.7 455.0 1052.4 461.6 1057.8 462.6 C1063.3 463.6 1066.0 463.6 1071.4 463.6 C1076.9 463.6 1079.6 462.3 1085.1 461.7 C1090.5 461.1 1093.2 460.7 1098.7 460.7 C1104.1 460.7 1106.8 465.9 1112.3 466.3 C1117.7 466.7 1120.5 466.5 1125.9 466.7 C1131.4 466.9 1134.1 467.1 1139.5 467.1 C1142.6 467.1 1147.3 465.9 1147.3 465.9" fill="none" stroke="#2e6496" stroke-width="2" stroke-linejoin="round" stroke-linecap="round"/>
<circle cx="486.0" cy="474.9" r="0.9" fill="#fff" fill-opacity="0.75"/>
<circle cx="499.6" cy="459.1" r="0.9" fill="#fff" fill-opacity="0.75"/>
<circle cx="513.2" cy="456.5" r="0.9" fill="#fff" fill-opacity="0.75"/>
<circle cx="526.8" cy="473.6" r="0.9" fill="#fff" fill-opacity="0.75"/>
<circle cx="540.5" cy="480.6" r="0.9" fill="#fff" fill-opacity="0.75"/>
<circle cx="554.1" cy="467.4" r="0.9" fill="#fff" fill-opacity="0.75"/>
<circle cx="567.7" cy="480.0" r="0.9" fill="#fff" fill-opacity="0.75"/>
<circle cx="581.3" cy="473.3" r="0.9" fill="#fff" fill-opacity="0.75"/>
<circle cx="594.9" cy="457.0" r="0.9" fill="#fff" fill-opacity="0.75"/>
<circle cx="608.5" cy="442.5" r="0.9" fill="#fff" fill-opacity="0.75"/>
<circle cx="622.1" cy="477.0" r="0.9" fill="#fff" fill-opacity="0.75"/>
<circle cx="635.8" cy="482.0" r="0.9" fill="#fff" fill-opacity="0.75"/>
<circle cx="649.4" cy="480.0" r="0.9" fill="#fff" fill-opacity="0.75"/>
<circle cx="663.0" cy="478.0" r="0.9" fill="#fff" fill-opacity="0.75"/>
<circle cx="676.6" cy="476.0" r="0.9" fill="#fff" fill-opacity="0.75"/>
<circle cx="690.2" cy="474.0" r="0.9" fill="#fff" fill-opacity="0.75"/>
<circle cx="703.8" cy="475.0" r="0.9" fill="#fff" fill-opacity="0.75"/>
<circle cx="717.5" cy="476.0" r="0.9" fill="#fff" fill-opacity="0.75"/>
<circle cx="731.1" cy="477.0" r="0.9" fill="#fff" fill-opacity="0.75"/>
<circle cx="744.7" cy="479.6" r="0.9" fill="#fff" fill-opacity="0.75"/>
<circle cx="758.3" cy="477.9" r="0.9" fill="#fff" fill-opacity="0.75"/>
<circle cx="771.9" cy="496.9" r="0.9" fill="#fff" fill-opacity="0.75"/>
<circle cx="785.5" cy="466.1" r="0.9" fill="#fff" fill-opacity="0.75"/>
<circle cx="799.1" cy="464.4" r="0.9" fill="#fff" fill-opacity="0.75"/>
<circle cx="812.8" cy="468.3" r="0.9" fill="#fff" fill-opacity="0.75"/>
<circle cx="826.4" cy="498.3" r="0.9" fill="#fff" fill-opacity="0.75"/>
<circle cx="840.0" cy="498.3" r="0.9" fill="#fff" fill-opacity="0.75"/>
<circle cx="853.6" cy="499.0" r="0.9" fill="#fff" fill-opacity="0.75"/>
<circle cx="867.2" cy="497.8" r="0.9" fill="#fff" fill-opacity="0.75"/>
<circle cx="880.8" cy="497.2" r="0.9" fill="#fff" fill-opacity="0.75"/>
<circle cx="894.5" cy="481.3" r="0.9" fill="#fff" fill-opacity="0.75"/>
<circle cx="908.1" cy="481.7" r="0.9" fill="#fff" fill-opacity="0.75"/>
<circle cx="921.7" cy="492.9" r="0.9" fill="#fff" fill-opacity="0.75"/>
<circle cx="935.3" cy="492.6" r="0.9" fill="#fff" fill-opacity="0.75"/>
<circle cx="948.9" cy="467.5" r="0.9" fill="#fff" fill-opacity="0.75"/>
<circle cx="962.5" cy="467.5" r="0.9" fill="#fff" fill-opacity="0.75"/>
<circle cx="976.1" cy="496.9" r="0.9" fill="#fff" fill-opacity="0.75"/>
<circle cx="989.8" cy="495.7" r="0.9" fill="#fff" fill-opacity="0.75"/>
<circle cx="1003.4" cy="495.7" r="0.9" fill="#fff" fill-opacity="0.75"/>
<circle cx="1017.0" cy="492.6" r="0.9" fill="#fff" fill-opacity="0.75"/>
<circle cx="1030.6" cy="457.1" r="0.9" fill="#fff" fill-opacity="0.75"/>
<circle cx="1044.2" cy="455.0" r="0.9" fill="#fff" fill-opacity="0.75"/>
<circle cx="1057.8" cy="462.6" r="0.9" fill="#fff" fill-opacity="0.75"/>
<circle cx="1071.4" cy="463.6" r="0.9" fill="#fff" fill-opacity="0.75"/>
<circle cx="1085.1" cy="461.7" r="0.9" fill="#fff" fill-opacity="0.75"/>
<circle cx="1098.7" cy="460.7" r="0.9" fill="#fff" fill-opacity="0.75"/>
<circle cx="1112.3" cy="466.3" r="0.9" fill="#fff" fill-opacity="0.75"/>
<circle cx="1125.9" cy="466.7" r="0.9" fill="#fff" fill-opacity="0.75"/>
<circle cx="1139.5" cy="467.1" r="0.9" fill="#fff" fill-opacity="0.75"/>
<circle cx="1147.3" cy="465.9" r="0.9" fill="#fff" fill-opacity="0.75"/>
<path d="M486.0 474.9 C486.0 474.9 494.2 472.5 499.6 460.4 C505.1 448.3 507.8 414.5 513.2 414.5 C518.7 414.5 521.4 422.1 526.8 427.5 C532.3 432.9 535.0 441.3 540.5 441.3 C545.9 441.3 548.6 440.7 554.1 440.2 C559.5 439.7 562.2 440.2 567.7 438.9 C573.1 437.6 575.9 438.9 581.3 432.6 C586.8 426.3 589.5 408.0 594.9 399.0 C600.4 390.0 603.1 387.6 608.5 387.6 C614.0 387.6 616.7 411.5 622.1 422.0 C627.6 432.5 630.3 435.4 635.8 440.0 C641.2 444.6 643.9 445.0 649.4 445.0 C654.8 445.0 657.5 444.8 663.0 444.0 C668.4 443.2 671.2 441.8 676.6 441.0 C682.1 440.2 684.8 440.4 690.2 440.0 C695.7 439.6 698.4 439.3 703.8 439.0 C709.3 438.7 712.0 438.5 717.5 438.5 C722.9 438.5 725.6 438.5 731.1 439.5 C736.5 440.5 739.2 446.8 744.7 446.8 C750.1 446.8 752.9 441.2 758.3 441.2 C763.7 441.2 766.5 465.7 771.9 465.7 C777.4 465.7 780.1 455.4 785.5 455.4 C791.0 455.4 793.7 455.4 799.1 455.4 C804.6 455.4 807.3 465.3 812.8 469.2 C818.2 473.1 820.9 474.7 826.4 474.7 C831.8 474.7 834.5 470.6 840.0 470.6 C845.4 470.6 848.2 472.0 853.6 473.5 C859.1 475.0 861.8 477.9 867.2 477.9 C872.7 477.9 875.4 473.0 880.8 473.0 C886.3 473.0 889.0 479.2 894.5 479.2 C899.9 479.2 902.6 478.5 908.1 474.4 C913.5 470.3 916.2 458.8 921.7 458.8 C927.1 458.8 929.8 461.4 935.3 461.4 C940.7 461.4 943.5 454.5 948.9 454.5 C954.4 454.5 957.1 455.4 962.5 455.4 C968.0 455.4 970.7 450.2 976.1 450.2 C981.6 450.2 984.3 455.7 989.8 458.5 C995.2 461.3 997.9 463.6 1003.4 464.0 C1008.8 464.4 1011.5 464.0 1017.0 464.4 C1022.4 464.8 1025.2 471.2 1030.6 473.5 C1036.0 475.8 1038.8 475.2 1044.2 476.1 C1049.7 477.0 1052.4 477.4 1057.8 478.2 C1063.3 479.0 1066.0 480.3 1071.4 480.3 C1076.9 480.3 1079.6 479.8 1085.1 479.8 C1090.5 479.8 1093.2 479.8 1098.7 479.8 C1104.1 479.8 1106.8 485.1 1112.3 485.5 C1117.7 485.9 1120.5 485.5 1125.9 485.9 C1131.4 486.3 1134.1 486.6 1139.5 487.3 C1142.6 487.7 1147.3 488.6 1147.3 488.6" fill="none" stroke="#3a8a2a" stroke-width="2" stroke-linejoin="round" stroke-linecap="round"/>
<circle cx="486.0" cy="474.9" r="0.9" fill="#fff" fill-opacity="0.75"/>
<circle cx="499.6" cy="460.4" r="0.9" fill="#fff" fill-opacity="0.75"/>
<circle cx="513.2" cy="414.5" r="0.9" fill="#fff" fill-opacity="0.75"/>
<circle cx="526.8" cy="427.5" r="0.9" fill="#fff" fill-opacity="0.75"/>
<circle cx="540.5" cy="441.3" r="0.9" fill="#fff" fill-opacity="0.75"/>
<circle cx="554.1" cy="440.2" r="0.9" fill="#fff" fill-opacity="0.75"/>
<circle cx="567.7" cy="438.9" r="0.9" fill="#fff" fill-opacity="0.75"/>
<circle cx="581.3" cy="432.6" r="0.9" fill="#fff" fill-opacity="0.75"/>
<circle cx="594.9" cy="399.0" r="0.9" fill="#fff" fill-opacity="0.75"/>
<circle cx="608.5" cy="387.6" r="0.9" fill="#fff" fill-opacity="0.75"/>
<circle cx="622.1" cy="422.0" r="0.9" fill="#fff" fill-opacity="0.75"/>
<circle cx="635.8" cy="440.0" r="0.9" fill="#fff" fill-opacity="0.75"/>
<circle cx="649.4" cy="445.0" r="0.9" fill="#fff" fill-opacity="0.75"/>
<circle cx="663.0" cy="444.0" r="0.9" fill="#fff" fill-opacity="0.75"/>
<circle cx="676.6" cy="441.0" r="0.9" fill="#fff" fill-opacity="0.75"/>
<circle cx="690.2" cy="440.0" r="0.9" fill="#fff" fill-opacity="0.75"/>
<circle cx="703.8" cy="439.0" r="0.9" fill="#fff" fill-opacity="0.75"/>
<circle cx="717.5" cy="438.5" r="0.9" fill="#fff" fill-opacity="0.75"/>
<circle cx="731.1" cy="439.5" r="0.9" fill="#fff" fill-opacity="0.75"/>
<circle cx="744.7" cy="446.8" r="0.9" fill="#fff" fill-opacity="0.75"/>
<circle cx="758.3" cy="441.2" r="0.9" fill="#fff" fill-opacity="0.75"/>
<circle cx="771.9" cy="465.7" r="0.9" fill="#fff" fill-opacity="0.75"/>
<circle cx="785.5" cy="455.4" r="0.9" fill="#fff" fill-opacity="0.75"/>
<circle cx="799.1" cy="455.4" r="0.9" fill="#fff" fill-opacity="0.75"/>
<circle cx="812.8" cy="469.2" r="0.9" fill="#fff" fill-opacity="0.75"/>
<circle cx="826.4" cy="474.7" r="0.9" fill="#fff" fill-opacity="0.75"/>
<circle cx="840.0" cy="470.6" r="0.9" fill="#fff" fill-opacity="0.75"/>
<circle cx="853.6" cy="473.5" r="0.9" fill="#fff" fill-opacity="0.75"/>
<circle cx="867.2" cy="477.9" r="0.9" fill="#fff" fill-opacity="0.75"/>
<circle cx="880.8" cy="473.0" r="0.9" fill="#fff" fill-opacity="0.75"/>
<circle cx="894.5" cy="479.2" r="0.9" fill="#fff" fill-opacity="0.75"/>
<circle cx="908.1" cy="474.4" r="0.9" fill="#fff" fill-opacity="0.75"/>
<circle cx="921.7" cy="458.8" r="0.9" fill="#fff" fill-opacity="0.75"/>
<circle cx="935.3" cy="461.4" r="0.9" fill="#fff" fill-opacity="0.75"/>
<circle cx="948.9" cy="454.5" r="0.9" fill="#fff" fill-opacity="0.75"/>
<circle cx="962.5" cy="455.4" r="0.9" fill="#fff" fill-opacity="0.75"/>
<circle cx="976.1" cy="450.2" r="0.9" fill="#fff" fill-opacity="0.75"/>
<circle cx="989.8" cy="458.5" r="0.9" fill="#fff" fill-opacity="0.75"/>
<circle cx="1003.4" cy="464.0" r="0.9" fill="#fff" fill-opacity="0.75"/>
<circle cx="1017.0" cy="464.4" r="0.9" fill="#fff" fill-opacity="0.75"/>
<circle cx="1030.6" cy="473.5" r="0.9" fill="#fff" fill-opacity="0.75"/>
<circle cx="1044.2" cy="476.1" r="0.9" fill="#fff" fill-opacity="0.75"/>
<circle cx="1057.8" cy="478.2" r="0.9" fill="#fff" fill-opacity="0.75"/>
<circle cx="1071.4" cy="480.3" r="0.9" fill="#fff" fill-opacity="0.75"/>
<circle cx="1085.1" cy="479.8" r="0.9" fill="#fff" fill-opacity="0.75"/>
<circle cx="1098.7" cy="479.8" r="0.9" fill="#fff" fill-opacity="0.75"/>
<circle cx="1112.3" cy="485.5" r="0.9" fill="#fff" fill-opacity="0.75"/>
<circle cx="1125.9" cy="485.9" r="0.9" fill="#fff" fill-opacity="0.75"/>
<circle cx="1139.5" cy="487.3" r="0.9" fill="#fff" fill-opacity="0.75"/>
<circle cx="1147.3" cy="488.6" r="0.9" fill="#fff" fill-opacity="0.75"/>
<path d="M486.0 474.9 C486.0 474.9 494.2 438.6 499.6 438.6 C505.1 438.6 507.8 458.4 513.2 458.4 C518.7 458.4 521.4 455.8 526.8 455.8 C532.3 455.8 535.0 457.8 540.5 458.8 C545.9 459.8 548.6 460.6 554.1 460.6 C559.5 460.6 562.2 459.7 567.7 459.7 C573.1 459.7 575.9 462.5 581.3 462.5 C586.8 462.5 589.5 456.2 594.9 447.4 C600.4 438.6 603.1 418.4 608.5 418.4 C614.0 418.4 616.7 439.3 622.1 448.0 C627.6 456.7 630.3 458.0 635.8 462.0 C641.2 466.0 643.9 468.0 649.4 468.0 C654.8 468.0 657.5 464.6 663.0 462.0 C668.4 459.4 671.2 457.8 676.6 455.0 C682.1 452.2 684.8 451.0 690.2 448.0 C695.7 445.0 698.4 442.4 703.8 440.0 C709.3 437.6 712.0 436.0 717.5 436.0 C722.9 436.0 725.6 436.0 731.1 436.3 C736.5 436.6 739.2 443.8 744.7 443.8 C750.1 443.8 752.9 439.6 758.3 439.6 C763.7 439.6 766.5 480.4 771.9 480.4 C777.4 480.4 780.1 468.3 785.5 468.3 C791.0 468.3 793.7 470.9 799.1 474.4 C804.6 477.9 807.3 485.6 812.8 485.6 C818.2 485.6 820.9 484.0 826.4 482.6 C831.8 481.2 834.5 478.7 840.0 478.7 C845.4 478.7 848.2 484.6 853.6 485.1 C859.1 485.6 861.8 485.1 867.2 485.6 C872.7 486.1 875.4 492.6 880.8 492.6 C886.3 492.6 889.0 488.6 894.5 488.6 C899.9 488.6 902.6 491.7 908.1 491.7 C913.5 491.7 916.2 482.2 921.7 482.2 C927.1 482.2 929.8 492.6 935.3 492.6 C940.7 492.6 943.5 480.4 948.9 480.4 C954.4 480.4 957.1 487.4 962.5 487.4 C968.0 487.4 970.7 476.1 976.1 476.1 C981.6 476.1 984.3 479.9 989.8 481.3 C995.2 482.7 997.9 483.0 1003.4 483.0 C1008.8 483.0 1011.5 482.0 1017.0 482.0 C1022.4 482.0 1025.2 482.7 1030.6 482.7 C1036.0 482.7 1038.8 475.8 1044.2 475.8 C1049.7 475.8 1052.4 493.4 1057.8 493.4 C1063.3 493.4 1066.0 493.2 1071.4 490.5 C1076.9 487.8 1079.6 479.8 1085.1 479.8 C1090.5 479.8 1093.2 499.2 1098.7 499.2 C1104.1 499.2 1106.8 488.8 1112.3 485.0 C1117.7 481.2 1120.5 480.3 1125.9 480.3 C1131.4 480.3 1134.1 480.3 1139.5 480.6 C1142.6 480.9 1147.3 487.0 1147.3 487.0" fill="none" stroke="#5cb83c" stroke-width="2.2" stroke-linejoin="round" stroke-linecap="round"/>
<circle cx="486.0" cy="474.9" r="0.9" fill="#fff" fill-opacity="0.75"/>
<circle cx="499.6" cy="438.6" r="0.9" fill="#fff" fill-opacity="0.75"/>
<circle cx="513.2" cy="458.4" r="0.9" fill="#fff" fill-opacity="0.75"/>
<circle cx="526.8" cy="455.8" r="0.9" fill="#fff" fill-opacity="0.75"/>
<circle cx="540.5" cy="458.8" r="0.9" fill="#fff" fill-opacity="0.75"/>
<circle cx="554.1" cy="460.6" r="0.9" fill="#fff" fill-opacity="0.75"/>
<circle cx="567.7" cy="459.7" r="0.9" fill="#fff" fill-opacity="0.75"/>
<circle cx="581.3" cy="462.5" r="0.9" fill="#fff" fill-opacity="0.75"/>
<circle cx="594.9" cy="447.4" r="0.9" fill="#fff" fill-opacity="0.75"/>
<circle cx="608.5" cy="418.4" r="0.9" fill="#fff" fill-opacity="0.75"/>
<circle cx="622.1" cy="448.0" r="0.9" fill="#fff" fill-opacity="0.75"/>
<circle cx="635.8" cy="462.0" r="0.9" fill="#fff" fill-opacity="0.75"/>
<circle cx="649.4" cy="468.0" r="0.9" fill="#fff" fill-opacity="0.75"/>
<circle cx="663.0" cy="462.0" r="0.9" fill="#fff" fill-opacity="0.75"/>
<circle cx="676.6" cy="455.0" r="0.9" fill="#fff" fill-opacity="0.75"/>
<circle cx="690.2" cy="448.0" r="0.9" fill="#fff" fill-opacity="0.75"/>
<circle cx="703.8" cy="440.0" r="0.9" fill="#fff" fill-opacity="0.75"/>
<circle cx="717.5" cy="436.0" r="0.9" fill="#fff" fill-opacity="0.75"/>
<circle cx="731.1" cy="436.3" r="0.9" fill="#fff" fill-opacity="0.75"/>
<circle cx="744.7" cy="443.8" r="0.9" fill="#fff" fill-opacity="0.75"/>
<circle cx="758.3" cy="439.6" r="0.9" fill="#fff" fill-opacity="0.75"/>
<circle cx="771.9" cy="480.4" r="0.9" fill="#fff" fill-opacity="0.75"/>
<circle cx="785.5" cy="468.3" r="0.9" fill="#fff" fill-opacity="0.75"/>
<circle cx="799.1" cy="474.4" r="0.9" fill="#fff" fill-opacity="0.75"/>
<circle cx="812.8" cy="485.6" r="0.9" fill="#fff" fill-opacity="0.75"/>
<circle cx="826.4" cy="482.6" r="0.9" fill="#fff" fill-opacity="0.75"/>
<circle cx="840.0" cy="478.7" r="0.9" fill="#fff" fill-opacity="0.75"/>
<circle cx="853.6" cy="485.1" r="0.9" fill="#fff" fill-opacity="0.75"/>
<circle cx="867.2" cy="485.6" r="0.9" fill="#fff" fill-opacity="0.75"/>
<circle cx="880.8" cy="492.6" r="0.9" fill="#fff" fill-opacity="0.75"/>
<circle cx="894.5" cy="488.6" r="0.9" fill="#fff" fill-opacity="0.75"/>
<circle cx="908.1" cy="491.7" r="0.9" fill="#fff" fill-opacity="0.75"/>
<circle cx="921.7" cy="482.2" r="0.9" fill="#fff" fill-opacity="0.75"/>
<circle cx="935.3" cy="492.6" r="0.9" fill="#fff" fill-opacity="0.75"/>
<circle cx="948.9" cy="480.4" r="0.9" fill="#fff" fill-opacity="0.75"/>
<circle cx="962.5" cy="487.4" r="0.9" fill="#fff" fill-opacity="0.75"/>
<circle cx="976.1" cy="476.1" r="0.9" fill="#fff" fill-opacity="0.75"/>
<circle cx="989.8" cy="481.3" r="0.9" fill="#fff" fill-opacity="0.75"/>
<circle cx="1003.4" cy="483.0" r="0.9" fill="#fff" fill-opacity="0.75"/>
<circle cx="1017.0" cy="482.0" r="0.9" fill="#fff" fill-opacity="0.75"/>
<circle cx="1030.6" cy="482.7" r="0.9" fill="#fff" fill-opacity="0.75"/>
<circle cx="1044.2" cy="475.8" r="0.9" fill="#fff" fill-opacity="0.75"/>
<circle cx="1057.8" cy="493.4" r="0.9" fill="#fff" fill-opacity="0.75"/>
<circle cx="1071.4" cy="490.5" r="0.9" fill="#fff" fill-opacity="0.75"/>
<circle cx="1085.1" cy="479.8" r="0.9" fill="#fff" fill-opacity="0.75"/>
<circle cx="1098.7" cy="499.2" r="0.9" fill="#fff" fill-opacity="0.75"/>
<circle cx="1112.3" cy="485.0" r="0.9" fill="#fff" fill-opacity="0.75"/>
<circle cx="1125.9" cy="480.3" r="0.9" fill="#fff" fill-opacity="0.75"/>
<circle cx="1139.5" cy="480.6" r="0.9" fill="#fff" fill-opacity="0.75"/>
<circle cx="1147.3" cy="487.0" r="0.9" fill="#fff" fill-opacity="0.75"/>
<circle cx="731" cy="436.5" r="7.5" fill="#5cb83c" fill-opacity="0.25"/>
<path d="M731.2 432.6 L734.6 438.3 L727.8 438.3 Z" fill="#5cb83c" stroke="#fff" stroke-width="0.8"/>
<path d="M627.5 383.5 H716 Q719 383.5 719 386.5 V431 L724 436.5 L719 441 V486.7 Q719 489.7 716 489.7 H627.5 Q624.5 489.7 624.5 486.7 V386.5 Q624.5 383.5 627.5 383.5 Z" fill="#f6f6f6" stroke="#6abf4b" stroke-width="1"/>
<text x="630.4" y="400.4" font-size="9.3" fill="#333" font-family="Liberation Sans">2018 FEB 18 - <tspan font-weight="700">H2O</tspan></text>
<circle cx="633.2" cy="410.7" r="2" fill="#e8365a"/>
<text x="638.7" y="413.7" font-size="9.3" fill="#333" font-family="Liberation Sans">XMR : <tspan font-weight="700">112.59 %</tspan></text>
<circle cx="633.2" cy="424.1" r="2" fill="#3a8a2a"/>
<text x="638.7" y="427.1" font-size="9.3" fill="#333" font-family="Liberation Sans">PPP : <tspan font-weight="700">259.35 %</tspan></text>
<circle cx="633.2" cy="437.5" r="2" fill="#2e6496"/>
<text x="638.7" y="440.5" font-size="9.3" fill="#333" font-family="Liberation Sans">PRFT : <tspan font-weight="700">97.17 %</tspan></text>
<circle cx="633.2" cy="450.8" r="2" fill="#5cb83c"/>
<text x="638.7" y="453.8" font-size="9.3" fill="#333" font-family="Liberation Sans">H2O : <tspan font-weight="700">272.22 %</tspan></text>
<circle cx="633.2" cy="464.2" r="2" fill="#55aaf0"/>
<text x="638.7" y="467.2" font-size="9.3" fill="#333" font-family="Liberation Sans">ANC : <tspan font-weight="700">64.91 %</tspan></text>
<circle cx="633.2" cy="477.6" r="2" fill="#f26a25"/>
<text x="638.7" y="480.6" font-size="9.3" fill="#333" font-family="Liberation Sans">SJCX : <tspan font-weight="700">72.30 %</tspan></text>
<path d="M738.2 425.9 V442.2 L742 438.6 L744.6 444.6 L747 443.6 L744.4 437.8 L749.6 437.6 Z" fill="#fff" stroke="#111" stroke-width="1" stroke-linejoin="miter"/>
</svg>
<svg class="b" style="left:0;top:0" width="1280" height="607" viewBox="0 0 1280 607">
<rect x="213.5" y="85.5" width="223" height="42" fill="#fff" stroke="#f42828" stroke-width="3"/>
<text x="325" y="102.4" font-size="14.3" fill="#f43c46" text-anchor="middle" font-family="Liberation Sans">Add or Remove coins by clicking</text>
<text x="325" y="119" font-size="14.3" fill="#f43c46" text-anchor="middle" font-family="Liberation Sans">on the icons</text>
<path d="M907 59.3 H1099 Q1109 59.3 1109 69.3 V71.5 L1160 73 L1109 79.6 V93 Q1109 103 1099 103 H907 Q897 103 897 93 V69.3 Q897 59.3 907 59.3 Z" fill="#fff"/>
<path d="M1109 79.6 V93 Q1109 103 1099 103 H907 Q897 103 897 93 V69.3 Q897 59.3 907 59.3 H1099 Q1109 59.3 1109 69.3 V71.5" fill="none" stroke="#f42828" stroke-width="2.4"/>
<path d="M1109 71.6 L1160 73.2 L1109 79.5" fill="none" stroke="#f42828" stroke-width="1.5" stroke-linejoin="round"/>
<text x="1003" y="76.7" font-size="14.9" fill="#f43c46" text-anchor="middle" font-family="Liberation Sans">Click here to get back to the</text>
<text x="1003" y="94.2" font-size="14.9" fill="#f43c46" text-anchor="middle" font-family="Liberation Sans">initial Watchlist</text>
<path d="M824 147 H1012 L1123 133.8 L1056.8 152.7 V183.5 Q1056.8 194 1046 194 H824 Q814 194 814 184 V157 Q814 147 824 147 Z" fill="#fff"/>
<path d="M1056.5 152.5 V183.5 Q1056.5 194 1046 194 H824 Q814 194 814 184 V157 Q814 146.6 824 146.6 H1014" fill="none" stroke="#f42828" stroke-width="2.4"/>
<path d="M1006 146.8 L1123 133.8 L1056.3 152.3" fill="none" stroke="#f42828" stroke-width="1.5" stroke-linejoin="round"/>
<text x="935" y="166.4" font-size="15" fill="#f43c46" text-anchor="middle" font-family="Liberation Sans">Click Report Settings to edit the</text>
<text x="935" y="183" font-size="15" fill="#f43c46" text-anchor="middle" font-family="Liberation Sans">Market Cap limit</text>
</svg>

</body></html>
